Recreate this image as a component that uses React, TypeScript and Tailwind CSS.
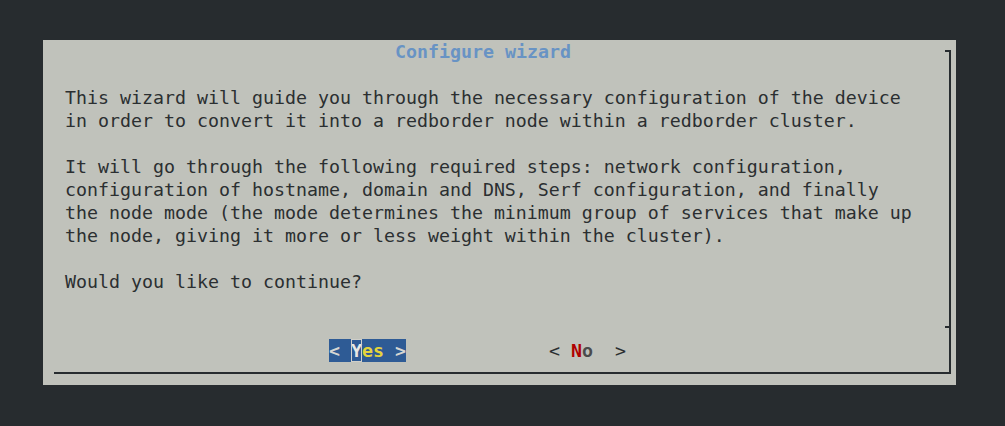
import React from "react";

const lines = [
  "This wizard will guide you through the necessary configuration of the device",
  "in order to convert it into a redborder node within a redborder cluster.",
  "",
  "It will go through the following required steps: network configuration,",
  "configuration of hostname, domain and DNS, Serf configuration, and finally",
  "the node mode (the mode determines the minimum group of services that make up",
  "the node, giving it more or less weight within the cluster).",
  "",
  "Would you like to continue?",
];

export default function App() {
  return (
    <div
      className="w-[1005px] h-[426px] bg-[#272c2f] pt-[40px] pl-[43px] text-[18.27px] text-[#2b2f31]"
      style={{ fontFamily: '"DejaVu Sans Mono", monospace' }}
    >
      {/* Dialog panel */}
      <div className="w-[913px] h-[345px] bg-[#c0c2bb] pt-[10px] pl-[11px]">
        <div className="relative flex flex-col w-[897px] h-[324px] border-r-2 border-b-2 border-[#272c2f]">
          {/* corner ticks */}
          <span className="absolute right-[-2px] top-0 w-[6px] h-[2px] bg-[#272c2f]" />
          <span className="absolute right-0 top-[276px] w-[4px] h-[2px] bg-[#272c2f]" />

          {/* Title */}
          <div className="-mt-[10px] h-[23px] leading-[23px] pl-[341px] font-bold text-[#6893c4] whitespace-pre">
            Configure wizard
          </div>
          <div className="h-[23px]" />

          {/* Body text */}
          <div className="pl-[11px]">
            {lines.map((l, i) => (
              <div key={i} className="h-[23px] leading-[23px] whitespace-pre">
                {l}
              </div>
            ))}
          </div>
          <div className="h-[46px]" />

          {/* Buttons */}
          <div className="flex h-[23px] leading-[23px] whitespace-pre pl-[275px] font-bold">
            <div className="flex bg-[#2e5b95] text-[#d6d6d2]">
              <span>{"< "}</span>
              <span className="outline outline-1 -outline-offset-1 outline-[#cfcfca] text-[#e8e8e4]">Y</span>
              <span className="text-[#e5d43c]">es</span>
              <span>{" >"}</span>
            </div>
            <div className="flex ml-[143px]">
              <span className="font-normal">{"< "}</span>
              <span className="text-[#b00000]">N</span>
              <span className="text-[#4b4b4b]">o</span>
              <span className="font-normal">{"  >"}</span>
            </div>
          </div>
        </div>
      </div>
    </div>
  );
}
